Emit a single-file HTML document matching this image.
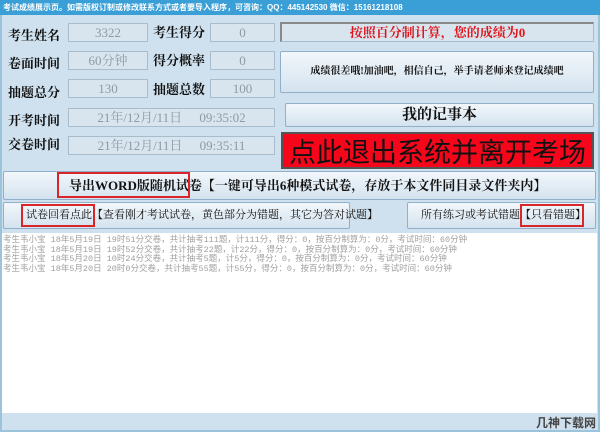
<!DOCTYPE html>
<html><head><meta charset="utf-8"><style>
*{margin:0;padding:0;box-sizing:border-box}
body{width:600px;height:432px;background:#cfe1ee;position:relative;overflow:hidden;font-family:"Liberation Serif","Noto Serif CJK SC",serif}
.a{position:absolute}
.t{background:#3a9fd6;left:0;top:0;width:600px;height:15px;color:#fff;font:bold 8px "Liberation Sans","Noto Sans CJK SC",sans-serif;line-height:15px;padding-left:3px;white-space:nowrap}
.l{font-size:13px;font-weight:bold;color:#111;white-space:nowrap}
.f{background:#d8e5ef;border:1px solid #a9bccb;color:#8d9aa6;font-size:13px;text-align:center;line-height:17px;white-space:nowrap}
.b{background:linear-gradient(#f2f7fb,#d4e3ef);border:1px solid #8fb0c8;border-radius:2px;text-align:center;white-space:nowrap;color:#111}
.r{border:2px solid #d8262b}
.log{font:8.5px "Liberation Mono","WenQuanYi Zen Hei",monospace;color:#a0a0a0;line-height:9.6px;white-space:pre}
</style></head><body>
<div class="a t">考试成绩展示页。如需版权订制或修改联系方式或者要导入程序，可咨询：QQ：445142530 微信：15161218108</div>
<div class="a" style="left:0;top:15px;width:600px;height:417px;border:2px solid #9cc3dc;border-top:none"></div>

<div class="a l" style="left:8px;top:25px">考生姓名</div>
<div class="a l" style="left:8px;top:53px">卷面时间</div>
<div class="a l" style="left:8px;top:82px">抽题总分</div>
<div class="a l" style="left:8px;top:110px">开考时间</div>
<div class="a l" style="left:8px;top:134px">交卷时间</div>
<div class="a l" style="left:153px;top:22px">考生得分</div>
<div class="a l" style="left:153px;top:50px">得分概率</div>
<div class="a l" style="left:153px;top:79px">抽题总数</div>

<div class="a f" style="left:68px;top:23px;width:80px;height:19px;text-align:left;padding-left:26px">3322</div>
<div class="a f" style="left:68px;top:51px;width:80px;height:19px">60分钟</div>
<div class="a f" style="left:68px;top:79px;width:80px;height:19px">130</div>
<div class="a f" style="left:210px;top:23px;width:65px;height:19px">0</div>
<div class="a f" style="left:210px;top:51px;width:65px;height:19px">0</div>
<div class="a f" style="left:210px;top:79px;width:65px;height:19px">100</div>
<div class="a f" style="left:68px;top:108px;width:207px;height:19px;word-spacing:14px">21年/12月/11日 09:35:02</div>
<div class="a f" style="left:68px;top:136px;width:207px;height:19px;word-spacing:14px">21年/12月/11日 09:35:11</div>

<div class="a f" style="left:280px;top:22px;width:314px;height:20px;color:#e0161c;font-weight:bold;font-size:13px;line-height:18px;border-left:2px solid #888;border-top:2px solid #888">按照百分制计算，您的成绩为0</div>
<div class="a b" style="left:280px;top:51px;width:314px;height:42px;font-size:10px;font-weight:bold;line-height:40px">成绩很差哦!加油吧，相信自己，举手请老师来登记成绩吧</div>
<div class="a b" style="left:285px;top:103px;width:309px;height:24px;font-size:15px;font-weight:bold;line-height:22px">我的记事本</div>
<div class="a" style="left:281px;top:132px;width:313px;height:37px;background:#f5061a;border:2px solid #555;color:#111;font-size:27px;line-height:33px;text-align:center;white-space:nowrap;font-family:'Noto Sans CJK SC',sans-serif">点此退出系统并离开考场</div>

<div class="a b" style="left:3px;top:171px;width:593px;height:29px;font-size:13px;font-weight:bold;line-height:27px;text-align:left;padding-left:65px">导出WORD版随机试卷【一键可导出6种模式试卷，存放于本文件同目录文件夹内】</div>
<div class="a r" style="left:57px;top:172px;width:133px;height:26px"></div>
<div class="a b" style="left:3px;top:202px;width:347px;height:27px;font-size:11px;line-height:25px;text-align:left;padding-left:22px">试卷回看点此【查看刚才考试试卷，黄色部分为错题，其它为答对试题】</div>
<div class="a r" style="left:21px;top:204px;width:74px;height:23px"></div>
<div class="a b" style="left:407px;top:202px;width:189px;height:27px;font-size:11px;line-height:25px;text-align:left;padding-left:13px">所有练习或考试错题【只看错题】</div>
<div class="a r" style="left:520px;top:204px;width:64px;height:23px"></div>

<div class="a" style="left:2px;top:233px;width:595px;height:180px;background:#fff"></div>
<div class="a log" style="left:3px;top:236px">考生韦小宝 18年5月19日 19时51分交卷，共计抽考111题，计111分，得分：0，按百分制算为：0分，考试时间：60分钟
考生韦小宝 18年5月19日 19时52分交卷，共计抽考22题，计22分，得分：0，按百分制算为：0分，考试时间：60分钟
考生韦小宝 18年5月20日 10时24分交卷，共计抽考5题，计5分，得分：0，按百分制算为：0分，考试时间：60分钟
考生韦小宝 18年5月20日 20时0分交卷，共计抽考55题，计55分，得分：0，按百分制算为：0分，考试时间：60分钟</div>
<div class="a" style="left:536px;top:416px;font:bold 12px 'Noto Sans CJK SC',sans-serif;color:#444;line-height:14px">几神下载网</div>
</body></html>
